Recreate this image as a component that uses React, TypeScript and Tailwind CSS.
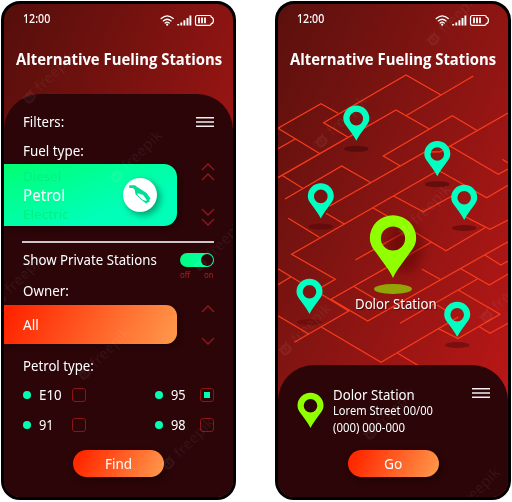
import { useLayoutEffect, useRef, useState } from "react";

/** Text condensed or widened horizontally so that it occupies a given width. */
function Fit({ w, className = "", children }: { w: number; className?: string; children: string }) {
  const ref = useRef<HTMLSpanElement>(null);
  const [k, setK] = useState(1);
  useLayoutEffect(() => {
    const measure = () => {
      if (ref.current && ref.current.offsetWidth) setK(w / ref.current.offsetWidth);
    };
    measure();
    document.fonts?.ready.then(measure);
  }, [w]);
  return (
    <span className="block shrink-0" style={{ width: w }}>
      <span
        ref={ref}
        className={`inline-block origin-left align-top whitespace-nowrap ${className}`}
        style={{ transform: `scaleX(${k})` }}
      >
        {children}
      </span>
    </span>
  );
}

function StatusIcons() {
  return (
    <svg width="55" height="13" viewBox="0 0 55 13" fill="none" stroke="#fff" strokeLinecap="round">
      <path d="M1.2 4.6Q7.2 -.8 13.2 4.6M3.3 6.9Q7.2 3.5 11.1 6.9M5.2 9Q7.2 7.3 9.2 9" strokeWidth="1.3" />
      <circle cx="7.2" cy="10.7" r="1.1" fill="#fff" stroke="none" />
      <path
        d="M18.2 11.4V9.9M21.3 11.4V8.4M24.4 11.4V6.3M27.5 11.4V4M30.4 11.4V1.6"
        strokeWidth="1.9"
        strokeLinecap="butt"
      />
      <path d="M37.5 1.5H49.6Q51.3 1.5 51.3 3.2Q53.4 3.5 53.4 6.4T51.3 9.6Q51.3 11.3 49.6 11.3H37.5Q35.5 11.3 35.5 9.4V3.4Q35.5 1.5 37.5 1.5Z" strokeWidth="1.2" />
      <path d="M39 3.6V9.2M42 3.6V9.2M45 3.6V9.2" strokeWidth="1.8" strokeLinecap="butt" />
    </svg>
  );
}

function Header() {
  return (
    <>
      <div className="flex h-8 shrink-0 items-center justify-between pr-[18px] pl-[19px]">
        <div className="pt-[3px]">
          <Fit w={27} className="text-[13px] leading-4 font-medium">12:00</Fit>
        </div>
        <StatusIcons />
      </div>
      <div className="flex h-[46px] shrink-0 items-center justify-center">
        <Fit w={206} className="font-['Open_Sans'] text-[16.5px] leading-6 font-bold">Alternative Fueling Stations</Fit>
      </div>
    </>
  );
}

function Menu() {
  return (
    <svg width="18" height="10" viewBox="0 0 18 10" stroke="#f4eeee" strokeWidth="1.4">
      <path d="M0 .8H18M0 5H18M0 9.2H18" />
    </svg>
  );
}

function Option({ label, column, w, checked = false }: { label: string; column: string; w: number; checked?: boolean }) {
  return (
    <div className="flex h-[30px] items-center">
      <div className="size-2 rounded-full bg-[#00ffb4]" />
      <div className={`ml-2 pt-px ${column}`}>
        <Fit w={w} className="text-[14.5px]">{label}</Fit>
      </div>
      <div className="flex size-[14px] items-center justify-center rounded-[3px] border-[1.3px] border-[#8c1416]">
        {checked && <div className="size-[6px] bg-[#00ffb4]" />}
      </div>
    </div>
  );
}

function Action({ label, w }: { label: string; w: number }) {
  return (
    <button className="flex h-[27px] w-[91px] items-center justify-center rounded-full bg-linear-[115deg] from-[#ff2900] from-10% to-[#ff9b4e] pt-0.5 shadow-[2px_3px_6px_rgba(0,0,0,.4)]">
      <Fit w={w} className="text-[14.5px]">{label}</Fit>
    </button>
  );
}

function Pin({ x, y, s = 1, color = "#00ffc0", shadow }: { x: number; y: number; s?: number; color?: string; shadow?: string }) {
  return (
    <g transform={`translate(${x} ${y})`}>
      {shadow && <ellipse cy={s > 1 ? 11 : 8} rx={s > 1 ? 19 : 12.3} ry={s > 1 ? 5 : 3} fill={shadow} />}
      <path
        transform={`scale(${s})`}
        fillRule="evenodd"
        fill={color}
        d="M0 0C-2.2-5-6-9.1-9.3-14C-11.5-17-13-19-13-22.5A13 12.8 0 0 1 13-22.5C13-19 11.5-17 9.3-14C6-9.1 2.2-5 0 0ZM0-29A6.8 6.8 0 1 0 0-15.4A6.8 6.8 0 1 0 0-29Z"
      />
    </g>
  );
}

const streets = [
  "278 128.3 321 103.7 338 113.3",
  "278 128.3 320 153.7",
  "278 148.7 295.3 139",
  "441 95 406 75 323.7 122.7 347.7 137",
  "278 177.6 396 110 429.3 129",
  "282.7 175.7 302.7 188.3",
  "285 199 341.7 166 371 182.7",
  "329.3 206.3 425 152 440 151.8 508 113",
  "400 165.7 383.3 156 452.3 115.7 476.7 130.3",
  "473.3 76 406 115.7",
  "450 146 498.3 174.3 508 169",
  "502.3 159.3 508 163",
  "437 169.5 486.7 197.7 508 185.3",
  "437 171 291.7 254.3 335.3 279.3 319 288.7",
  "393.7 196 423.3 211.7 452 196",
  "372.7 207.7 389 217",
  "288.3 218.3 319.3 237.3",
  "326 213.3 344.3 224",
  "465 216.7 490 229.3 508 220",
  "415 232.3 446 250.7 485 227.7",
  "355.3 260 412 228",
  "431.7 242 331 299.3 367.7 321 508 241.7",
  "421.7 269 440 279.3",
  "485 255 500.7 265 508 261",
  "460 268.3 489.3 285 508 274",
  "477.3 279 400 323.3",
  "437 305 447 311",
  "458.3 290 500 314.3 458 338.5 438 328.3",
  "479.3 326.7 490 333.3 508 323.3",
  "278 268.8 303 284",
  "278 284.8 291 276.7",
  "354.3 286.7 377 300",
  "278 315.8 308.7 334",
  "294.3 342.3 348.7 311 321 294",
  "321.7 327.3 381 362.3 458.3 317",
  "397.7 353.3 419 366",
];

function Watermark({ className }: { className: string }) {
  return (
    <div className={`pointer-events-none absolute flex -rotate-45 items-center gap-1 text-[15px] leading-none font-medium text-white/6 ${className}`}>
      <svg width="14" height="14" viewBox="0 0 14 14" fill="currentColor">
        <path fillRule="evenodd" d="M2 5L0 2L4 3Q7 1 10 3L14 2L12 5Q15 13 7 13T2 5ZM4 6V8H6V6ZM8 6V8H10V6ZM4 10H10V9H4Z" />
      </svg>
      freepik
    </div>
  );
}

const phone =
  "relative flex h-[499px] shrink-0 flex-col overflow-hidden rounded-[19px] border-[3px] border-black bg-linear-to-br text-white";

function FiltersPhone() {
  return (
    <section className={`${phone} w-[235px] from-[#540e0b] to-[#b91716] to-90%`}>
      <Header />
      <div className="mt-3 flex grow flex-col rounded-t-[36px] bg-[#2c0508] pt-[13px]">
        <div className="flex h-[30px] items-center justify-between pr-[19px] pl-[19px]">
          <div className="pt-0.5">
            <Fit w={41} className="text-[14.5px]">Filters:</Fit>
          </div>
          <Menu />
        </div>
        <div className="flex h-[27px] items-center pt-[2px] pl-[19px]">
          <Fit w={61} className="text-[14.5px]">Fuel type:</Fit>
        </div>

        <div className="flex h-[62px] items-center justify-between pr-[18px]">
          <div className="flex h-full w-[173px] items-center justify-between rounded-r-[13px] bg-linear-to-br from-[#00ff70] to-[#00ffb9] to-70% pr-[20px] pl-[19px] shadow-[3px_3px_5px_rgba(0,0,0,.3)]">
            <div className="flex flex-col leading-[19px] text-[#00f083]">
              <Fit w={38} className="text-[13px]">Diesel</Fit>
              <Fit w={42} className="text-[15.5px] text-white">Petrol</Fit>
              <Fit w={46} className="text-[13px]">Electric</Fit>
            </div>
            <div className="flex size-[34px] items-center justify-center rounded-full bg-white shadow-[3px_3px_7px_rgba(0,60,35,.5)]">
              <svg width="24" height="22" viewBox="0 0 24 22">
                <path
                  fillRule="evenodd"
                  fill="#00df96"
                  d="M1.2 1.2H7.1L8 2.3L18.6 9.1L22.6 14.8L21 16.1L22 17.2L18 19.6L13.1 15.6L7.5 10.2L6.7 5.7L4.9 4H1.2ZM9.5 9.2L9.7 10.9L14.2 15.6L17.8 17.1L18.9 16.2L15.2 11Z"
                />
              </svg>
            </div>
          </div>
          <svg width="14" height="64" viewBox="0 0 14 64" fill="none" stroke="#92191b" strokeWidth="1.3">
            <path d="M1 7L7 1L13 7M1 17L7 11L13 17M1 46L7 52L13 46M1 56L7 62L13 56" />
          </svg>
        </div>

        <div className="mt-[15px] mr-[19px] ml-[18px] h-[1.5px] shrink-0 bg-[#cfc6cc]" />
        <div className="mt-[2.5px] flex h-[32px] pr-[19px] pl-[19px]">
          <div className="flex h-[32px] grow items-center">
            <Fit w={134} className="text-[14.5px]">Show Private Stations</Fit>
          </div>
          <div className="w-[34px] pt-[8px]">
            <div className="flex h-[14px] items-center justify-end rounded-full bg-linear-to-r from-[#00ff81] to-[#00ffab] pr-px">
              <div className="size-3 rounded-full bg-[#2c0508]" />
            </div>
            <div className="flex justify-between pt-px text-[9.5px] leading-[13px] text-[#a81e20]">
              <Fit w={10}>off</Fit>
              <Fit w={10}>on</Fit>
            </div>
          </div>
        </div>
        <div className="flex h-[28px] items-center pt-0.5 pl-[19px]">
          <Fit w={46} className="text-[14.5px]">Owner:</Fit>
        </div>

        <div className="flex h-[39px] items-center justify-between pr-[18px]">
          <div className="flex h-full w-[173px] items-center rounded-r-[11px] bg-linear-[115deg] from-[#ff2500] from-5% to-[#ff9a4c] pt-[3px] pl-[19px] shadow-[3px_3px_5px_rgba(0,0,0,.3)]">
            <Fit w={16} className="text-[14.5px]">All</Fit>
          </div>
          <svg width="14" height="42" viewBox="0 0 14 42" fill="none" stroke="#92191b" strokeWidth="1.3">
            <path d="M1 8L7 2L13 8M1 34L7 40L13 34" />
          </svg>
        </div>

        <div className="mt-[7px] flex h-[29px] items-center pt-[3px] pl-[19px]">
          <Fit w={71} className="text-[14.5px]">Petrol type:</Fit>
        </div>
        <div className="flex justify-between pr-[19px] pl-[19px]">
          <div>
            <Option label="E10" column="w-[33px]" w={23} />
            <Option label="91" column="w-[33px]" w={15} />
          </div>
          <div>
            <Option label="95" column="w-[29px]" w={15} checked />
            <Option label="98" column="w-[29px]" w={15} />
          </div>
        </div>
        <div className="mt-[10px] flex justify-center">
          <Action label="Find" w={27} />
        </div>
      </div>
      <Watermark className="top-[66px] left-[10px]" />
      <Watermark className="top-[145px] left-[97px]" />
      <Watermark className="top-[233px] left-[181px]" />
      <Watermark className="top-[268px] left-[-20px]" />
      <Watermark className="top-[342px] left-[65px]" />
      <Watermark className="top-[432px] left-[149px]" />
    </section>
  );
}

function MapPhone() {
  return (
    <section className={`${phone} w-[236px] from-[#5a100d] to-[#c51717]`}>
      <svg className="absolute inset-0" width="230" height="493" viewBox="278 4 230 493">
        <defs>
          <filter id="soft" x="-50%" y="-50%" width="200%" height="200%">
            <feGaussianBlur stdDeviation="5" />
          </filter>
        </defs>
        <g fill="none" stroke="#f73b1b" strokeWidth="1.3">
          {streets.map((points) => (
            <polyline key={points} points={points} />
          ))}
        </g>
        <ellipse cx="405" cy="248" rx="17" ry="25" fill="#500" opacity=".45" filter="url(#soft)" />
        <Pin x={356.3} y={140.8} shadow="#580c0c" />
        <Pin x={437.3} y={176.2} shadow="#650c0c" />
        <Pin x={320.8} y={218.6} shadow="#640c0c" />
        <Pin x={464.2} y={220} shadow="#700d0d" />
        <Pin x={309.5} y={314} shadow="#6f0d0d" />
        <Pin x={457.2} y={337} shadow="#790f0f" />
        <Pin x={393} y={278} s={1.78} color="#90ff00" shadow="#91a507" />
      </svg>
      <div className="relative flex grow flex-col">
        <Header />
        <div className="mt-[213px] flex h-[17px] items-center pl-[77px] leading-[17px]">
          <Fit w={82} className="text-[14px] [text-shadow:1px_1px_1px_rgba(0,0,0,.5)]">Dolor Station</Fit>
        </div>
        <div className="mt-[53px] grow rounded-t-[36px] bg-[#2c0508]">
          <div className="flex h-[85px] pt-[21px] pr-[18px] pl-[19px]">
            <svg className="mt-[6px]" width="27" height="38" viewBox="-13.5 -36 27 38">
              <Pin x={0} y={0} color="#90ff00" />
            </svg>
            <div className="ml-[9px] grow">
              <div className="h-[17px] leading-[17px]">
                <Fit w={82} className="text-[14.5px]">Dolor Station</Fit>
              </div>
              <div className="h-[16.5px] leading-[16px]">
                <Fit w={100} className="text-[12px]">Lorem Street 00/00</Fit>
              </div>
              <div className="h-[16.5px] leading-[16px]">
                <Fit w={72} className="text-[12px]">(000) 000-000</Fit>
              </div>
            </div>
            <div className="mt-[2px]">
              <Menu />
            </div>
          </div>
          <div className="flex justify-center">
            <Action label="Go" w={18} />
          </div>
        </div>
      </div>
      <Watermark className="top-[110px] left-[28px]" />
      <Watermark className="top-[199px] left-[112px]" />
      <Watermark className="top-[8px] left-[140px]" />
      <Watermark className="top-[285px] left-[193px]" />
      <Watermark className="top-[318px] left-[-8px]" />
      <Watermark className="top-[402px] left-[77px]" />
      <Watermark className="top-[482px] left-[161px]" />
    </section>
  );
}

export default function App() {
  return (
    <main className="flex h-[502px] w-[512px] items-start gap-[39px] overflow-hidden bg-white pt-px pl-px font-['Noto_Sans','Open_Sans',sans-serif]">
      <FiltersPhone />
      <MapPhone />
    </main>
  );
}
